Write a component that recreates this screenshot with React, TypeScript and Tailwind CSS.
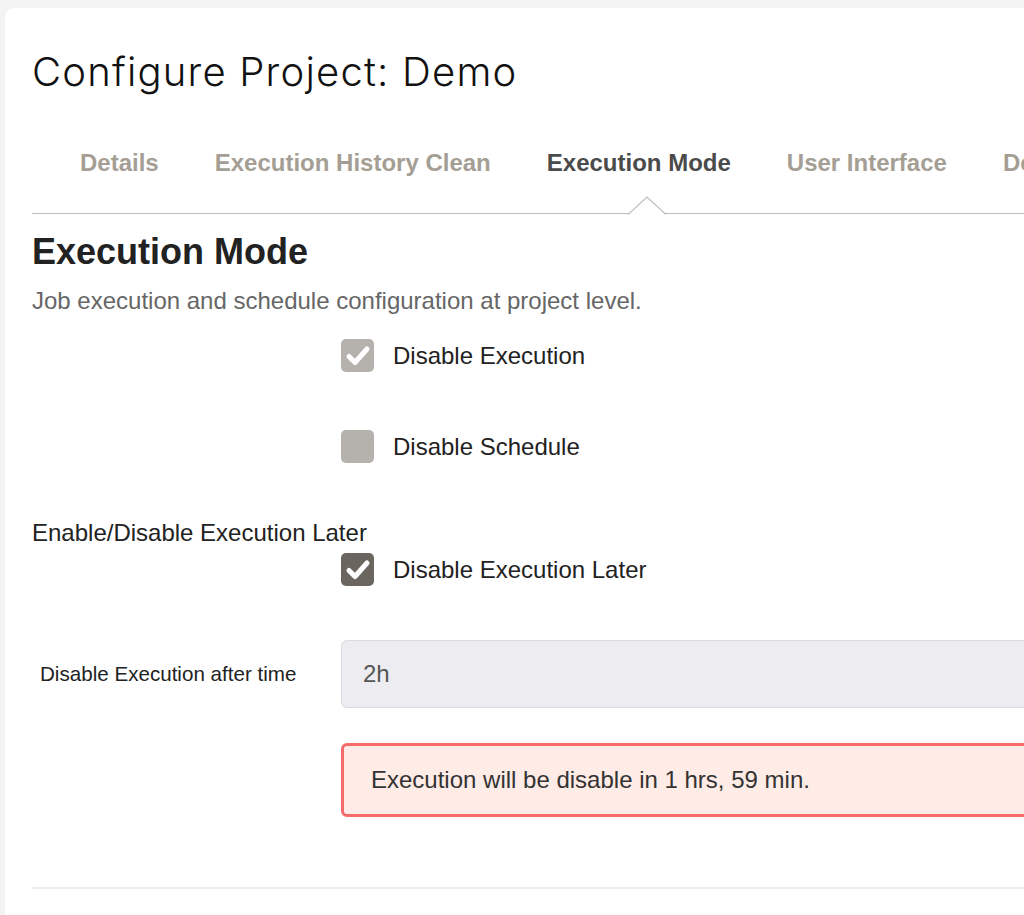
import React from "react";

function Check({ tone }: { tone: "light" | "dark" | "empty" }) {
  const bg =
    tone === "dark" ? "bg-[#6a655f]" : "bg-[#b5b2ae]";
  return (
    <div className={`w-[33px] h-[33px] rounded-[5px] ${bg} flex items-center justify-center shrink-0`}>
      {tone !== "empty" && (
        <svg width="33" height="33" viewBox="0 0 33 33">
          <polyline
            points="8,17.5 14,23.5 26,10"
            fill="none"
            stroke="white"
            strokeWidth="5"
            strokeLinecap="round"
            strokeLinejoin="round"
          />
        </svg>
      )}
    </div>
  );
}

export default function App() {
  const tabs = ["Details", "Execution History Clean", "Execution Mode", "User Interface", "Default File Browser"];
  return (
    <div className="w-full h-[915px] overflow-hidden bg-[#f4f4f4] font-['Liberation_Sans',Arial,sans-serif]">
      <div className="ml-[5px] mt-[8px] w-[1150px] h-[1000px] bg-white rounded-tl-[9px] pl-[27px] pt-[42px]">
        <h1 className="text-[40px] leading-[44px] font-light text-[#111] font-['Inter','Liberation_Sans',sans-serif] tracking-[1.2px]">
          Configure Project: Demo
        </h1>
        <div className="relative border-b border-[#bdbdbd]">
          <ul className="flex pl-[20px]">
            {tabs.map((t) => (
              <li
                key={t}
                className={`px-[28px] pt-[52px] pb-[33px] text-[24px] leading-[34px] font-bold whitespace-nowrap ${
                  t === "Execution Mode" ? "text-[#4b4b4b]" : "text-[#a49e94]"
                }`}
              >
                {t}
              </li>
            ))}
          </ul>
          <svg
            className="absolute left-[596px] top-[102px]"
            width="38"
            height="20"
            viewBox="0 0 38 20"
          >
            <polygon points="0,18.5 19,1 38,18.5" fill="white" />
            <polyline points="0,18.5 19,1 38,18.5" fill="none" stroke="#bdbdbd" strokeWidth="1.2" />
            <rect x="0" y="19" width="38" height="1" fill="white" />
          </svg>
        </div>

        <h2 className="mt-[18px] text-[36px] leading-[40px] font-bold text-[#222]">Execution Mode</h2>
        <p className="mt-[13px] text-[24px] leading-[32px] text-[#666]">
          Job execution and schedule configuration at project level.
        </p>

        <div className="mt-[22px] pl-[309px] flex items-center h-[33px]">
          <Check tone="light" />
          <span className="ml-[19px] text-[24px] text-[#222]">Disable Execution</span>
        </div>
        <div className="mt-[58px] pl-[309px] flex items-center h-[33px]">
          <Check tone="empty" />
          <span className="ml-[19px] text-[24px] text-[#222]">Disable Schedule</span>
        </div>

        <div className="mt-[54px] text-[24px] leading-[32px] text-[#222]">Enable/Disable Execution Later</div>
        <div className="mt-[4px] pl-[309px] flex items-center h-[33px]">
          <Check tone="dark" />
          <span className="ml-[19px] text-[24px] text-[#222]">Disable Execution Later</span>
        </div>

        <div className="mt-[54px] flex items-center">
          <label className="w-[309px] pl-[8px] text-[20.6px] text-[#222]">Disable Execution after time</label>
          <div className="flex-1 h-[68px] bg-[#ededf1] border border-[#dcdce0] rounded-[6px] flex items-center pl-[21px] text-[24px] text-[#555]">
            2h
          </div>
        </div>

        <div className="mt-[35px] ml-[309px] h-[74px] bg-[#ffece6] border-[3px] border-[#f76b6b] rounded-[6px] flex items-center pl-[27px] text-[24px] text-[#333]">
          Execution will be disable in 1 hrs, 59 min.
        </div>

        <div className="mt-[70px] h-[2px] bg-[#eeeeee]" />
      </div>
    </div>
  );
}
